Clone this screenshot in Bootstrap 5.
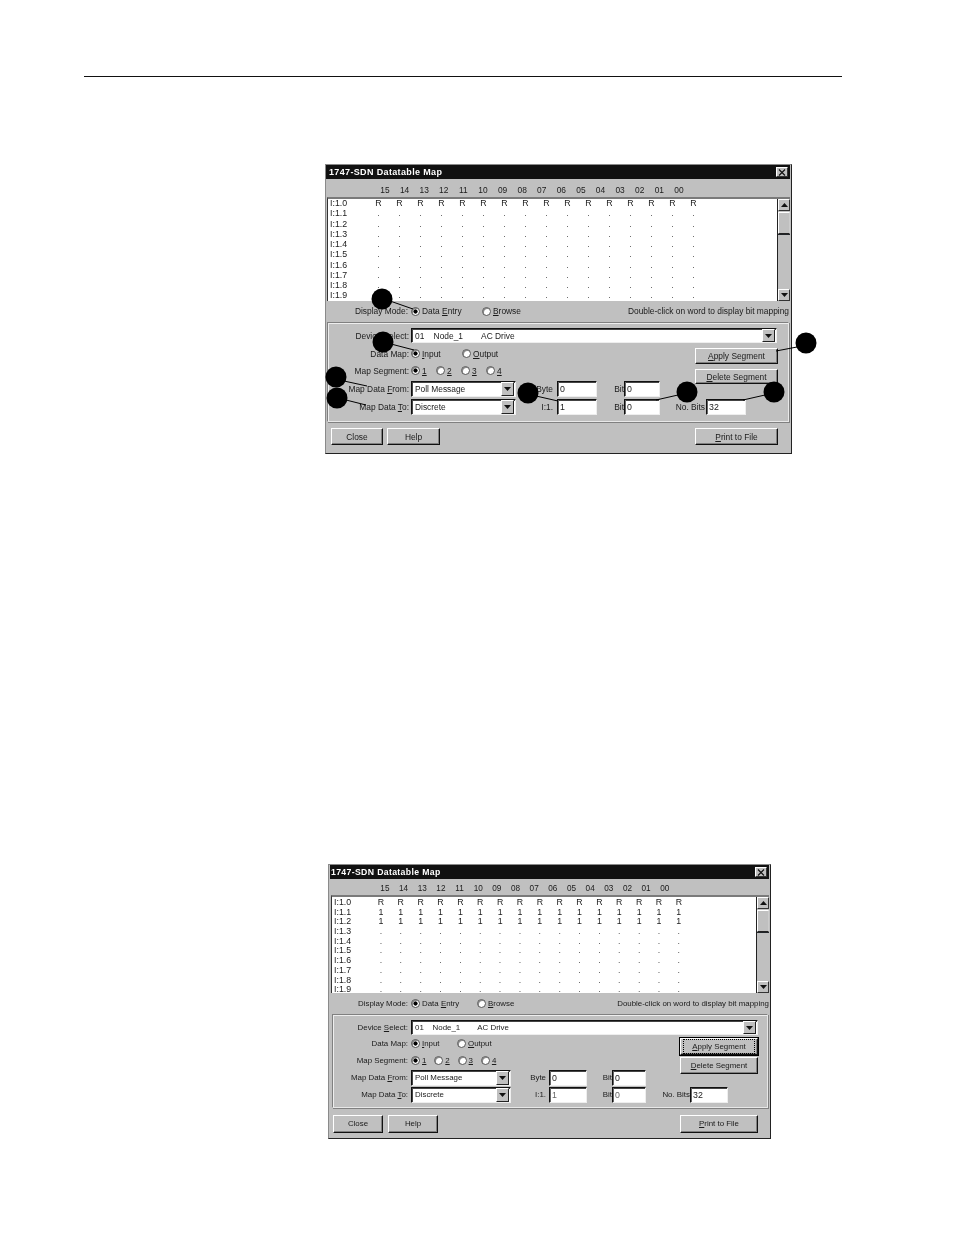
<!DOCTYPE html>
<html lang="en">
<head>
<meta charset="utf-8">
<title>1747-SDN Datatable Map</title>
<link rel="stylesheet" href="https://cdn.jsdelivr.net/npm/bootstrap@5.3.0/dist/css/bootstrap.min.css">
<style>
body{background:#fff;color:#1a1a1a;font:8.4px/10px "Liberation Sans",Arial,sans-serif;}
.sheet{width:954px;height:1235px;padding:76px 0 0 84px;overflow:hidden;}
.rulei{width:758px;height:1px;background:#111;}
.overlay{position:absolute;left:0;top:0;pointer-events:none;}
.dlg{background:#c0c0c0;border:1px solid #8a8a8a;border-right-color:#222;border-bottom:1px solid #222;filter:blur(.3px);}
.dlg-a{width:467px;height:290px;margin:87px 0 0 241px;--p:21px;--hp:19.6px;--rh:10.25px;--lw:38px;}
.dlg-b{width:443px;height:275px;margin:410px 0 0 244px;font-size:7.9px;--p:19.87px;--hp:18.67px;--rh:9.7px;--lw:37px;}
.ttl{height:14px;margin-right:1px;background:#111;color:#fff;font-weight:700;font-size:9px;letter-spacing:.35px;padding:0 2px 0 3px;}
.dlg-b .ttl{margin-left:1px;font-size:8.7px;padding-left:1px;}
.xbox{width:12px;height:10px;background:#c0c0c0;border:1px solid;border-color:#fff #333 #333 #fff;}
.hdr{height:18px;padding:6px 0 0 49.2px;}
.dlg-b .hdr{height:16px;padding:5px 0 0 46.6px;font-size:8.2px;}
.cells{display:grid;grid-template-columns:repeat(16,var(--p));text-align:center;}
.hdr .cells{grid-template-columns:repeat(16,var(--hp));}
.cells i{font-style:normal;}
.lwrap{height:104px;margin:0 1px;border-top:2px solid #7a7a7a;border-left:1px solid #333;}
.dlg-b .lwrap{height:98px;margin:0 1px 0 2px;}
.lst{background:#fff;overflow:hidden;padding-left:2px;font-size:8.8px;}
.dlg-b .lst{padding-top:1px;}
.dlg-a .rw:first-child{margin-top:-1px;}
.rw{height:var(--rh);line-height:var(--rh);display:flex;}
.rw>span{width:var(--lw);flex:none;}
.dot{color:#555;}
.sbar{width:13px;flex:none;border-left:1px solid #222;}
.sbtn{height:12px;background:#c0c0c0;border:1px solid;border-color:#fff #333 #333 #fff;flex:none;}
.sthumb{height:22px;margin-top:1px;border:1px solid;border-color:#fff #ccc #222 #fff;background:#c0c0c0;flex:none;}
.strack{flex:1 1 auto;}
.mrow{height:21px;padding-right:2px;}
.dlg-a .mrow{padding-bottom:1px;}
.dlg-b .mrow{padding-right:1px;}
.lbl{flex:none;text-align:right;white-space:nowrap;}
.dlg-a .mrow .lbl{width:82px;margin-right:3px;}
.dlg-b .mrow .lbl{width:79px;margin-right:3px;}
.dlg-a .f>.lbl:first-child{width:81px;margin-right:2px;}
.dlg-b .f>.lbl:first-child{width:75px;margin-right:3px;}
.grp{border:1px solid #808080;border-right-color:#e8e8e8;border-bottom-color:#e8e8e8;box-shadow:inset 1px 1px 0 #eee,1px 1px 0 #808080;}
.dlg-a .grp{height:100px;margin:0 2px 0 1px;padding-top:5px;}
.dlg-b .grp{height:94px;margin:0 2px 0 3px;padding-top:5px;}
.f{height:15px;}
.dlg-a .devf{width:366px;}
.dlg-b .devf{width:347px;}
.fld{background:#fff;border:1px solid;border-color:#111 #eee #eee #111;box-shadow:inset 1px 1px 0 #444;height:100%;padding:0 1px 0 3px;overflow:hidden;white-space:pre;flex:none;}
.drop{width:13px;height:100%;flex:none;margin-left:auto;background:#c0c0c0;border:1px solid;border-color:#fff #222 #222 #fff;}
.form-control.ifld{border-radius:0;font:inherit;font-size:8.8px;color:#1a1a1a;background:#fff;border:1px solid;border-color:#111 #eee #eee #111;box-shadow:inset 1px 0 0 #666,inset 0 1px 0 #444;height:100%;min-height:0;padding:0 1px 0 2px;flex:none;}
.form-control.ifld.gr{color:#666;}
.fa{width:332px;flex:none;}
.fb{width:313px;flex:none;}
.r1{height:17px;}
.from{height:16px;}
.dlg-a .r1:first-child{margin-top:2px;}
.dlg-a .from{margin-top:2px;}
.dlg-a .to{margin-top:2px;}
.dlg-b .from{margin-top:1px;}
.dlg-b .to{margin-top:1px;}
.dlg-a .sel{width:105px;}
.dlg-b .sel{width:100px;}
.dlg-a .bl{width:41px;padding-right:4px;}
.dlg-a .bi{width:40px;}
.dlg-a .tl{width:27px;}
.dlg-a .ti{width:36px;}
.dlg-b .bl{width:38px;padding-right:3px;}
.dlg-b .bi{width:38px;}
.dlg-b .tl{width:25px;}
.dlg-b .ti{width:34px;}
.form-check-input.wr{width:9px;height:9px;margin:0 2px 0 0;flex:none;background:#fff;border:1px solid #555;box-shadow:inset 1px 1px 0 #888;float:none;}
.form-check-input.wr:checked[type=radio]{background:radial-gradient(circle,#000 0 1.8px,#fff 2.4px);border-color:#555;}
.rg{display:flex;align-items:center;}
.dlg-a .w1{width:71px;}
.dlg-a .w2{width:51px;}
.dlg-a .w3{width:25px;}
.dlg-b .w1{width:66px;}
.dlg-b .w2{width:46px;}
.dlg-b .w3{width:23.3px;}
.btn.wb{--bs-btn-padding-x:0;--bs-btn-padding-y:0;border-radius:0;background:#c0c0c0;color:#1a1a1a;font:inherit;border:1px solid;border-color:#fff #111 #111 #fff;box-shadow:inset -1px -1px 0 #808080;display:flex;align-items:center;justify-content:center;flex:none;}
.rc{flex:none;}
.dlg-a .rc{width:103px;margin-left:15px;padding-top:5px;}
.dlg-b .rc{width:97px;margin-left:15px;padding-top:3px;}
.dlg-a .rc .btn{width:83px;height:16px;margin-left:20px;}
.dlg-b .rc .btn{width:78px;height:17px;margin-left:19px;}
.dlg-a .rc .btn+.btn{margin-top:5px;height:15px;}
.dlg-b .rc .btn+.btn{margin-top:2px;}
.focusb{outline:1px solid #000;outline-offset:0;}
.focusb>span{border:1px dotted #000;padding:2px 5px;line-height:9px;width:72px;text-align:center;}
.nb{height:16px;}
.dlg-a .nb{margin-top:15px;}
.dlg-b .nb{margin-top:13px;}
.dlg-a .nl{width:30px;margin-right:1px;}
.dlg-a .ni{width:40px;}
.dlg-b .nl{width:29px;}
.dlg-b .ni{width:38px;}
.foot{display:flex;}
.dlg-a .foot{padding:6px 13px 0 5px;}
.dlg-b .foot{padding:7px 12px 0 4px;}
.dlg-a .foot .btn{height:17px;width:52px;}
.dlg-a .foot .btn+.btn{margin-left:4px;width:53px;}
.dlg-a .foot .btn.ms-auto{margin-left:auto;width:83px;}
.dlg-b .foot .btn{height:18px;width:50px;}
.dlg-b .foot .btn+.btn{margin-left:5px;}
.dlg-b .foot .btn.ms-auto{margin-left:auto;width:78px;}
</style>
</head>
<body>
<div class="sheet position-relative">
<div class="rulei"></div>

<div class="dlg dlg-a">
  <div class="ttl d-flex align-items-center justify-content-between"><span>1747-SDN Datatable Map</span>
    <span class="xbox d-flex align-items-center justify-content-center"><svg width="8" height="7" viewBox="0 0 8 7"><path d="M1 0.5 7 6.5M7 0.5 1 6.5" stroke="#111" stroke-width="1.2"/></svg></span></div>
  <div class="hdr"><div class="cells"><i>15</i><i>14</i><i>13</i><i>12</i><i>11</i><i>10</i><i>09</i><i>08</i><i>07</i><i>06</i><i>05</i><i>04</i><i>03</i><i>02</i><i>01</i><i>00</i></div></div>
  <div class="lwrap d-flex">
    <div class="lst flex-grow-1">
      <div class="rw"><span>I:1.0</span><div class="cells"><i>R</i><i>R</i><i>R</i><i>R</i><i>R</i><i>R</i><i>R</i><i>R</i><i>R</i><i>R</i><i>R</i><i>R</i><i>R</i><i>R</i><i>R</i><i>R</i></div></div>
      <div class="rw"><span>I:1.1</span><div class="cells dot"><i>.</i><i>.</i><i>.</i><i>.</i><i>.</i><i>.</i><i>.</i><i>.</i><i>.</i><i>.</i><i>.</i><i>.</i><i>.</i><i>.</i><i>.</i><i>.</i></div></div>
      <div class="rw"><span>I:1.2</span><div class="cells dot"><i>.</i><i>.</i><i>.</i><i>.</i><i>.</i><i>.</i><i>.</i><i>.</i><i>.</i><i>.</i><i>.</i><i>.</i><i>.</i><i>.</i><i>.</i><i>.</i></div></div>
      <div class="rw"><span>I:1.3</span><div class="cells dot"><i>.</i><i>.</i><i>.</i><i>.</i><i>.</i><i>.</i><i>.</i><i>.</i><i>.</i><i>.</i><i>.</i><i>.</i><i>.</i><i>.</i><i>.</i><i>.</i></div></div>
      <div class="rw"><span>I:1.4</span><div class="cells dot"><i>.</i><i>.</i><i>.</i><i>.</i><i>.</i><i>.</i><i>.</i><i>.</i><i>.</i><i>.</i><i>.</i><i>.</i><i>.</i><i>.</i><i>.</i><i>.</i></div></div>
      <div class="rw"><span>I:1.5</span><div class="cells dot"><i>.</i><i>.</i><i>.</i><i>.</i><i>.</i><i>.</i><i>.</i><i>.</i><i>.</i><i>.</i><i>.</i><i>.</i><i>.</i><i>.</i><i>.</i><i>.</i></div></div>
      <div class="rw"><span>I:1.6</span><div class="cells dot"><i>.</i><i>.</i><i>.</i><i>.</i><i>.</i><i>.</i><i>.</i><i>.</i><i>.</i><i>.</i><i>.</i><i>.</i><i>.</i><i>.</i><i>.</i><i>.</i></div></div>
      <div class="rw"><span>I:1.7</span><div class="cells dot"><i>.</i><i>.</i><i>.</i><i>.</i><i>.</i><i>.</i><i>.</i><i>.</i><i>.</i><i>.</i><i>.</i><i>.</i><i>.</i><i>.</i><i>.</i><i>.</i></div></div>
      <div class="rw"><span>I:1.8</span><div class="cells dot"><i>.</i><i>.</i><i>.</i><i>.</i><i>.</i><i>.</i><i>.</i><i>.</i><i>.</i><i>.</i><i>.</i><i>.</i><i>.</i><i>.</i><i>.</i><i>.</i></div></div>
      <div class="rw"><span>I:1.9</span><div class="cells dot"><i>.</i><i>.</i><i>.</i><i>.</i><i>.</i><i>.</i><i>.</i><i>.</i><i>.</i><i>.</i><i>.</i><i>.</i><i>.</i><i>.</i><i>.</i><i>.</i></div></div>
    </div>
    <div class="sbar d-flex flex-column">
      <div class="sbtn d-flex align-items-center justify-content-center"><svg width="7" height="4" viewBox="0 0 7 4"><path d="M3.5 0 7 4H0z" fill="#111"/></svg></div>
      <div class="sthumb"></div><div class="strack border-top border-dark"></div>
      <div class="sbtn d-flex align-items-center justify-content-center"><svg width="7" height="4" viewBox="0 0 7 4"><path d="M0 0H7L3.5 4z" fill="#111"/></svg></div>
    </div>
  </div>
  <div class="mrow d-flex align-items-center">
    <span class="lbl">Display Mode:</span>
    <div class="rg w1"><input class="form-check-input wr" type="radio" name="a1" checked><span>Data <u>E</u>ntry</span></div>
    <div class="rg"><input class="form-check-input wr" type="radio" name="a1"><span><u>B</u>rowse</span></div>
    <span class="ms-auto">Double-click on word to display bit mapping</span>
  </div>
  <div class="grp">
    <div class="f d-flex align-items-center"><span class="lbl">Device <u>S</u>elect:</span>
      <div class="fld devf d-flex align-items-center">01    Node_1        AC Drive<span class="drop d-flex align-items-center justify-content-center"><svg width="7" height="4" viewBox="0 0 7 4"><path d="M0 0H7L3.5 4z" fill="#111"/></svg></span></div></div>
    <div class="d-flex">
      <div class="fa">
        <div class="r1 f d-flex align-items-center"><span class="lbl">Data Map:</span>
          <div class="rg w2"><input class="form-check-input wr" type="radio" name="a2" checked><span><u>I</u>nput</span></div>
          <div class="rg"><input class="form-check-input wr" type="radio" name="a2"><span><u>O</u>utput</span></div></div>
        <div class="r1 f d-flex align-items-center"><span class="lbl">Map Segment:</span>
          <div class="rg w3"><input class="form-check-input wr" type="radio" name="a3" checked><u>1</u></div>
          <div class="rg w3"><input class="form-check-input wr" type="radio" name="a3"><u>2</u></div>
          <div class="rg w3"><input class="form-check-input wr" type="radio" name="a3"><u>3</u></div>
          <div class="rg w3"><input class="form-check-input wr" type="radio" name="a3"><u>4</u></div></div>
        <div class="from f d-flex align-items-center"><span class="lbl">Map Data <u>F</u>rom:</span>
          <div class="fld sel d-flex align-items-center">Poll Message<span class="drop d-flex align-items-center justify-content-center"><svg width="7" height="4" viewBox="0 0 7 4"><path d="M0 0H7L3.5 4z" fill="#111"/></svg></span></div>
          <span class="lbl bl">Byte</span><input class="form-control ifld bi" value="0"><span class="lbl tl">Bit</span><input class="form-control ifld ti" value="0"></div>
        <div class="from to f d-flex align-items-center"><span class="lbl">Map Data <u>T</u>o:</span>
          <div class="fld sel d-flex align-items-center">Discrete<span class="drop d-flex align-items-center justify-content-center"><svg width="7" height="4" viewBox="0 0 7 4"><path d="M0 0H7L3.5 4z" fill="#111"/></svg></span></div>
          <span class="lbl bl">I:1.</span><input class="form-control ifld bi" value="1"><span class="lbl tl">Bit</span><input class="form-control ifld ti" value="0"></div>
      </div>
      <div class="rc">
        <button class="btn wb" type="button"><span><u>A</u>pply Segment</span></button>
        <button class="btn wb" type="button"><span><u>D</u>elete Segment</span></button>
        <div class="nb d-flex align-items-center"><span class="lbl nl">No. Bits</span><input class="form-control ifld ni" value="32"></div>
      </div>
    </div>
  </div>
  <div class="foot">
    <button class="btn wb" type="button">Close</button>
    <button class="btn wb" type="button">Help</button>
    <button class="btn wb ms-auto" type="button"><span><u>P</u>rint to File</span></button>
  </div>
</div>

<div class="dlg dlg-b">
  <div class="ttl d-flex align-items-center justify-content-between"><span>1747-SDN Datatable Map</span>
    <span class="xbox d-flex align-items-center justify-content-center"><svg width="8" height="7" viewBox="0 0 8 7"><path d="M1 0.5 7 6.5M7 0.5 1 6.5" stroke="#111" stroke-width="1.2"/></svg></span></div>
  <div class="hdr"><div class="cells"><i>15</i><i>14</i><i>13</i><i>12</i><i>11</i><i>10</i><i>09</i><i>08</i><i>07</i><i>06</i><i>05</i><i>04</i><i>03</i><i>02</i><i>01</i><i>00</i></div></div>
  <div class="lwrap d-flex">
    <div class="lst flex-grow-1">
      <div class="rw"><span>I:1.0</span><div class="cells"><i>R</i><i>R</i><i>R</i><i>R</i><i>R</i><i>R</i><i>R</i><i>R</i><i>R</i><i>R</i><i>R</i><i>R</i><i>R</i><i>R</i><i>R</i><i>R</i></div></div>
      <div class="rw"><span>I:1.1</span><div class="cells"><i>1</i><i>1</i><i>1</i><i>1</i><i>1</i><i>1</i><i>1</i><i>1</i><i>1</i><i>1</i><i>1</i><i>1</i><i>1</i><i>1</i><i>1</i><i>1</i></div></div>
      <div class="rw"><span>I:1.2</span><div class="cells"><i>1</i><i>1</i><i>1</i><i>1</i><i>1</i><i>1</i><i>1</i><i>1</i><i>1</i><i>1</i><i>1</i><i>1</i><i>1</i><i>1</i><i>1</i><i>1</i></div></div>
      <div class="rw"><span>I:1.3</span><div class="cells dot"><i>.</i><i>.</i><i>.</i><i>.</i><i>.</i><i>.</i><i>.</i><i>.</i><i>.</i><i>.</i><i>.</i><i>.</i><i>.</i><i>.</i><i>.</i><i>.</i></div></div>
      <div class="rw"><span>I:1.4</span><div class="cells dot"><i>.</i><i>.</i><i>.</i><i>.</i><i>.</i><i>.</i><i>.</i><i>.</i><i>.</i><i>.</i><i>.</i><i>.</i><i>.</i><i>.</i><i>.</i><i>.</i></div></div>
      <div class="rw"><span>I:1.5</span><div class="cells dot"><i>.</i><i>.</i><i>.</i><i>.</i><i>.</i><i>.</i><i>.</i><i>.</i><i>.</i><i>.</i><i>.</i><i>.</i><i>.</i><i>.</i><i>.</i><i>.</i></div></div>
      <div class="rw"><span>I:1.6</span><div class="cells dot"><i>.</i><i>.</i><i>.</i><i>.</i><i>.</i><i>.</i><i>.</i><i>.</i><i>.</i><i>.</i><i>.</i><i>.</i><i>.</i><i>.</i><i>.</i><i>.</i></div></div>
      <div class="rw"><span>I:1.7</span><div class="cells dot"><i>.</i><i>.</i><i>.</i><i>.</i><i>.</i><i>.</i><i>.</i><i>.</i><i>.</i><i>.</i><i>.</i><i>.</i><i>.</i><i>.</i><i>.</i><i>.</i></div></div>
      <div class="rw"><span>I:1.8</span><div class="cells dot"><i>.</i><i>.</i><i>.</i><i>.</i><i>.</i><i>.</i><i>.</i><i>.</i><i>.</i><i>.</i><i>.</i><i>.</i><i>.</i><i>.</i><i>.</i><i>.</i></div></div>
      <div class="rw"><span>I:1.9</span><div class="cells dot"><i>.</i><i>.</i><i>.</i><i>.</i><i>.</i><i>.</i><i>.</i><i>.</i><i>.</i><i>.</i><i>.</i><i>.</i><i>.</i><i>.</i><i>.</i><i>.</i></div></div>
    </div>
    <div class="sbar d-flex flex-column">
      <div class="sbtn d-flex align-items-center justify-content-center"><svg width="7" height="4" viewBox="0 0 7 4"><path d="M3.5 0 7 4H0z" fill="#111"/></svg></div>
      <div class="sthumb"></div><div class="strack border-top border-dark"></div>
      <div class="sbtn d-flex align-items-center justify-content-center"><svg width="7" height="4" viewBox="0 0 7 4"><path d="M0 0H7L3.5 4z" fill="#111"/></svg></div>
    </div>
  </div>
  <div class="mrow d-flex align-items-center">
    <span class="lbl">Display Mode:</span>
    <div class="rg w1"><input class="form-check-input wr" type="radio" name="b1" checked><span>Data <u>E</u>ntry</span></div>
    <div class="rg"><input class="form-check-input wr" type="radio" name="b1"><span><u>B</u>rowse</span></div>
    <span class="ms-auto">Double-click on word to display bit mapping</span>
  </div>
  <div class="grp">
    <div class="f d-flex align-items-center"><span class="lbl">Device <u>S</u>elect:</span>
      <div class="fld devf d-flex align-items-center">01    Node_1        AC Drive<span class="drop d-flex align-items-center justify-content-center"><svg width="7" height="4" viewBox="0 0 7 4"><path d="M0 0H7L3.5 4z" fill="#111"/></svg></span></div></div>
    <div class="d-flex">
      <div class="fb">
        <div class="r1 f d-flex align-items-center"><span class="lbl">Data Map:</span>
          <div class="rg w2"><input class="form-check-input wr" type="radio" name="b2" checked><span><u>I</u>nput</span></div>
          <div class="rg"><input class="form-check-input wr" type="radio" name="b2"><span><u>O</u>utput</span></div></div>
        <div class="r1 f d-flex align-items-center"><span class="lbl">Map Segment:</span>
          <div class="rg w3"><input class="form-check-input wr" type="radio" name="b3" checked><u>1</u></div>
          <div class="rg w3"><input class="form-check-input wr" type="radio" name="b3"><u>2</u></div>
          <div class="rg w3"><input class="form-check-input wr" type="radio" name="b3"><u>3</u></div>
          <div class="rg w3"><input class="form-check-input wr" type="radio" name="b3"><u>4</u></div></div>
        <div class="from f d-flex align-items-center"><span class="lbl">Map Data <u>F</u>rom:</span>
          <div class="fld sel d-flex align-items-center">Poll Message<span class="drop d-flex align-items-center justify-content-center"><svg width="7" height="4" viewBox="0 0 7 4"><path d="M0 0H7L3.5 4z" fill="#111"/></svg></span></div>
          <span class="lbl bl">Byte</span><input class="form-control ifld bi" value="0"><span class="lbl tl">Bit</span><input class="form-control ifld ti" value="0"></div>
        <div class="from to f d-flex align-items-center"><span class="lbl">Map Data <u>T</u>o:</span>
          <div class="fld sel d-flex align-items-center">Discrete<span class="drop d-flex align-items-center justify-content-center"><svg width="7" height="4" viewBox="0 0 7 4"><path d="M0 0H7L3.5 4z" fill="#111"/></svg></span></div>
          <span class="lbl bl">I:1.</span><input class="form-control ifld bi gr" value="1"><span class="lbl tl">Bit</span><input class="form-control ifld ti gr" value="0"></div>
      </div>
      <div class="rc">
        <button class="btn wb focusb" type="button"><span><u>A</u>pply Segment</span></button>
        <button class="btn wb" type="button"><span><u>D</u>elete Segment</span></button>
        <div class="nb d-flex align-items-center"><span class="lbl nl">No. Bits</span><input class="form-control ifld ni" value="32"></div>
      </div>
    </div>
  </div>
  <div class="foot">
    <button class="btn wb" type="button">Close</button>
    <button class="btn wb" type="button">Help</button>
    <button class="btn wb ms-auto" type="button"><span><u>P</u>rint to File</span></button>
  </div>
</div>

<svg class="overlay" width="954" height="1235" viewBox="0 0 954 1235" aria-hidden="true">
  <g stroke="#000" stroke-width="1" fill="none">
    <path d="M390 301 413 309"/><path d="M391 344 414 350"/><path d="M344 381 367 386"/><path d="M346 400 366 405"/>
    <path d="M536 396 558 401"/><path d="M797 347 776 351"/><path d="M678 395 656 400"/><path d="M765 395 743 400"/>
  </g>
  <g fill="#000">
    <circle cx="382" cy="299" r="10.5"/><circle cx="383" cy="342" r="10.5"/><circle cx="336" cy="377" r="10.5"/><circle cx="337" cy="398" r="10.5"/>
    <circle cx="528" cy="393" r="10.5"/><circle cx="806" cy="343" r="10.5"/><circle cx="687" cy="392" r="10.5"/><circle cx="774" cy="392" r="10.5"/>
  </g>
</svg>
</div>
<script src="https://cdn.jsdelivr.net/npm/bootstrap@5.3.0/dist/js/bootstrap.bundle.min.js"></script>
</body>
</html>
